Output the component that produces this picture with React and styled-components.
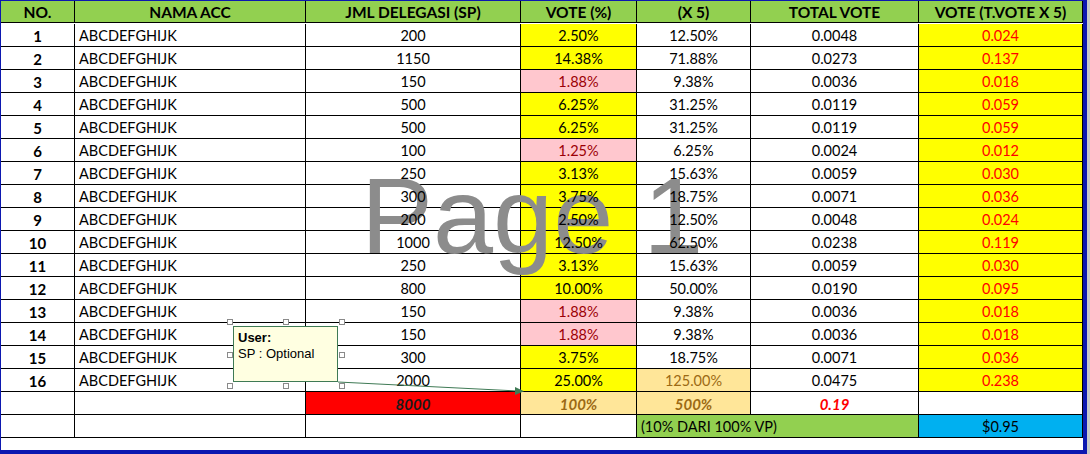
import styled, { createGlobalStyle } from "styled-components";

const GlobalStyle = createGlobalStyle`
  html, body {
    margin: 0;
    padding: 0;
    background: #ffffff;
  }
`;

const YELLOW = "#ffff00";
const PINK = "#ffc7ce";
const NEUTRAL = "#ffe699";

const rows = [
  [1, 200, "2.50%", "12.50%", "0.0048", "0.024", "y"],
  [2, 1150, "14.38%", "71.88%", "0.0273", "0.137", "y"],
  [3, 150, "1.88%", "9.38%", "0.0036", "0.018", "p"],
  [4, 500, "6.25%", "31.25%", "0.0119", "0.059", "y"],
  [5, 500, "6.25%", "31.25%", "0.0119", "0.059", "y"],
  [6, 100, "1.25%", "6.25%", "0.0024", "0.012", "p"],
  [7, 250, "3.13%", "15.63%", "0.0059", "0.030", "y"],
  [8, 300, "3.75%", "18.75%", "0.0071", "0.036", "y"],
  [9, 200, "2.50%", "12.50%", "0.0048", "0.024", "y"],
  [10, 1000, "12.50%", "62.50%", "0.0238", "0.119", "y"],
  [11, 250, "3.13%", "15.63%", "0.0059", "0.030", "y"],
  [12, 800, "10.00%", "50.00%", "0.0190", "0.095", "y"],
  [13, 150, "1.88%", "9.38%", "0.0036", "0.018", "p"],
  [14, 150, "1.88%", "9.38%", "0.0036", "0.018", "p"],
  [15, 300, "3.75%", "18.75%", "0.0071", "0.036", "y"],
  [16, 2000, "25.00%", "125.00%", "0.0475", "0.238", "y"],
];

const headers = [
  "NO.",
  "NAMA ACC",
  "JML DELEGASI (SP)",
  "VOTE (%)",
  "(X 5)",
  "TOTAL VOTE",
  "VOTE (T.VOTE X 5)",
];

function App() {
  return (
    <>
      <GlobalStyle />
      <Frame>
        <Inner>
          <Sheet>
            {headers.map((h) => (
              <Cell key={h} $bg="#92d050" $bold $size={15.5} $h={22}>
                <Txt>{h}</Txt>
              </Cell>
            ))}

            {rows.map(([no, sp, pct, x5, total, vote, tone]) => {
              const isLast = no === 16;
              return [
                <Cell key={`n${no}`} $bold $size={15}>
                  <Txt>{no}</Txt>
                </Cell>,
                <Cell key={`a${no}`} $align="flex-start">
                  <Txt>ABCDEFGHIJK</Txt>
                </Cell>,
                <Cell key={`s${no}`}>
                  <Txt>{sp}</Txt>
                </Cell>,
                <Cell
                  key={`p${no}`}
                  $bg={tone === "p" ? PINK : YELLOW}
                  $color={tone === "p" ? "#9c0006" : "#000"}
                >
                  <Txt>{pct}</Txt>
                </Cell>,
                <Cell
                  key={`x${no}`}
                  $bg={isLast ? NEUTRAL : undefined}
                  $color={isLast ? "#9c6a14" : "#000"}
                >
                  <Txt>{x5}</Txt>
                </Cell>,
                <Cell key={`t${no}`}>
                  <Txt>{total}</Txt>
                </Cell>,
                <Cell key={`v${no}`} $bg={YELLOW} $color="#ff0000">
                  <Txt>{vote}</Txt>
                </Cell>,
              ];
            })}

            <Cell />
            <Cell />
            <Cell $bg="#ff0000" $bold $italic $size={15} $color="#1a1a1a">
              <Txt>8000</Txt>
            </Cell>
            <Cell $bg={NEUTRAL} $bold $italic $size={15} $color="#9c6a14">
              <Txt>100%</Txt>
            </Cell>
            <Cell $bg={NEUTRAL} $bold $italic $size={15} $color="#9c6a14">
              <Txt>500%</Txt>
            </Cell>
            <Cell $bold $italic $size={15} $color="#ff0000">
              <Txt>0.19</Txt>
            </Cell>
            <Cell />

            <Cell />
            <Cell />
            <Cell />
            <Cell />
            <Cell $bg="#92d050" $span={2} $align="flex-start">
              <Txt>(10% DARI 100% VP)</Txt>
            </Cell>
            <Cell $bg="#00b0f0">
              <Txt>$0.95</Txt>
            </Cell>
          </Sheet>

          <Watermark>Page 1</Watermark>

          <Connector width="200" height="20" viewBox="0 0 200 20">
            <line x1="0" y1="2" x2="180" y2="11" stroke="#3f7a55" strokeWidth="1" />
            <polygon points="186,11.3 177,7 177,15" fill="#3f7a55" />
          </Connector>
          <Comment>
            <b>User:</b>
            <span>SP : Optional</span>
          </Comment>
          {[
            [226, 318],
            [282, 318],
            [338, 318],
            [226, 351],
            [338, 351],
            [226, 382],
            [282, 382],
            [338, 382],
          ].map(([x, y]) => (
            <Handle key={`${x}-${y}`} style={{ left: x, top: y }} />
          ))}
        </Inner>
      </Frame>
    </>
  );
}

const Frame = styled.div`
  width: 1090px;
  height: 454px;
  box-sizing: border-box;
  background: #c8c8c8;
  padding-right: 3px;
`;

const Inner = styled.div`
  position: relative;
  height: 100%;
  box-sizing: border-box;
  background: #ffffff;
  border-top: 1px solid #0c18b0;
  border-left: 1px solid #0c18b0;
  border-right: 4px solid #0c18b0;
  border-bottom: 4px solid #0c18b0;
  font-family: Lato, "Liberation Sans", sans-serif;
  font-size: 14.5px;
  color: #000;
`;

const Sheet = styled.div`
  display: grid;
  grid-template-columns: 74px 231px 215px 116px 114px 168px 164px;
  grid-auto-rows: 23px;
`;

const Cell = styled.div`
  box-sizing: border-box;
  height: ${(p) => (p.$h ? `${p.$h}px` : "23px")};
  grid-column: span ${(p) => p.$span || 1};
  display: flex;
  align-items: center;
  justify-content: ${(p) => p.$align || "center"};
  padding: 1px 4px 0;
  border-right: 1px solid #000;
  border-bottom: 1px solid #000;
  background: ${(p) => p.$bg || "transparent"};
  color: ${(p) => p.$color || "#000"};
  font-size: ${(p) => (p.$size ? `${p.$size}px` : "inherit")};
  font-weight: ${(p) => (p.$bold ? 700 : 400)};
  font-style: ${(p) => (p.$italic ? "italic" : "normal")};
  white-space: nowrap;
  overflow: hidden;
`;

const Txt = styled.span`
  position: relative;
  z-index: 2;
`;

const Watermark = styled.div`
  position: absolute;
  left: 360px;
  top: 161px;
  z-index: 1;
  font-family: "Liberation Sans", Arial, sans-serif;
  font-size: 108px;
  line-height: 1;
  color: #8c8c8c;
  pointer-events: none;
  white-space: nowrap;
`;

const Comment = styled.div`
  position: absolute;
  left: 232px;
  top: 325px;
  z-index: 3;
  width: 105px;
  height: 56px;
  box-sizing: border-box;
  padding: 3px 4px;
  background: #ffffe1;
  border: 1px solid #3f7a55;
  font-family: "Liberation Sans", Arial, sans-serif;
  font-size: 13px;
  line-height: 16px;
  display: flex;
  flex-direction: column;
`;

const Connector = styled.svg`
  position: absolute;
  left: 337px;
  top: 379px;
  z-index: 3;
  overflow: visible;
`;

const Handle = styled.div`
  position: absolute;
  z-index: 4;
  width: 6px;
  height: 6px;
  box-sizing: border-box;
  background: #ffffff;
  border: 1px solid #8a8a8a;
`;

export default App;
